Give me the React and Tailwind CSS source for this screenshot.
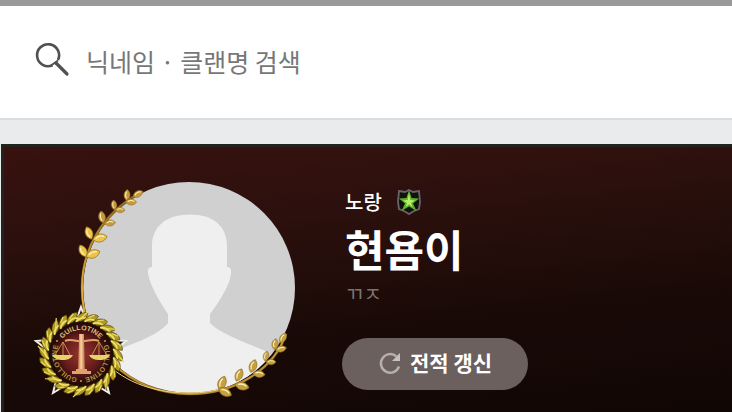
import React, { useState } from "react";

const upperLeaves = [
  { x: 83, y: 251, r: -28, s: 12 },
  { x: 93, y: 254, r: 68, s: 13 },
  { x: 89, y: 233, r: -22, s: 12 },
  { x: 100, y: 238, r: 78, s: 13 },
  { x: 102, y: 217, r: -10, s: 11 },
  { x: 110, y: 223, r: 84, s: 10 },
  { x: 114, y: 205, r: -6, s: 9 },
  { x: 120, y: 210, r: 92, s: 9 },
  { x: 127, y: 195, r: 4, s: 10 },
  { x: 131, y: 202, r: 92, s: 10 },
  { x: 138, y: 194, r: 62, s: 10 },
];

const lowerLeaves = [
  { x: 222, y: 383, r: 22, s: 13 },
  { x: 225, y: 392, r: 118, s: 13 },
  { x: 239, y: 375, r: 24, s: 12 },
  { x: 242, y: 386, r: 104, s: 13 },
  { x: 253, y: 366, r: 20, s: 12 },
  { x: 259, y: 374, r: 98, s: 11 },
  { x: 266, y: 356, r: 14, s: 9 },
  { x: 271, y: 362, r: 90, s: 9 },
  { x: 275, y: 344, r: 10, s: 10 },
  { x: 281, y: 349, r: 78, s: 10 },
  { x: 283, y: 338, r: 32, s: 10 },
];

// leaves of the wreath around the clan badge, thinner and wider in turn
const wreath = Array.from({ length: 24 }, (_, i) => ({ a: i * 15, wide: i % 3 === 0 }));

const Leaf = ({ x, y, r, s, fill }) => (
  <g transform={`translate(${x} ${y}) rotate(${r}) scale(${s / 10})`}>
    <path d="M0 -5.6C4 -2.6 4.2 2.4 0 5.6C-4.2 2.4 -4 -2.6 0 -5.6Z" fill={fill} stroke="#8a6a26" strokeWidth="0.5" />
    <path d="M-0.6 -3.4C-1.8 -1 -1.6 1.4 -0.4 3.2" stroke="#fff3b8" strokeWidth="1" fill="none" />
  </g>
);

const Emblem = () => (
  <svg viewBox="32 178 268 222" className="w-[268px] shrink-0" fill="none" role="img" aria-label="프로필">
    <defs>
      <linearGradient id="gold" x1="0" y1="0" x2="0" y2="1">
        <stop offset="0" stopColor="#8d6422" />
        <stop offset="0.5" stopColor="#e3b041" />
        <stop offset="1" stopColor="#b98b30" />
      </linearGradient>
      <radialGradient id="seal">
        <stop offset="0" stopColor="#96352f" />
        <stop offset="0.55" stopColor="#661d1b" />
        <stop offset="0.8" stopColor="#350f0d" />
        <stop offset="1" stopColor="#1d0907" />
      </radialGradient>
      <linearGradient id="post" x1="0" y1="0" x2="1" y2="0">
        <stop offset="0" stopColor="#b5703f" />
        <stop offset="0.45" stopColor="#ffd3a0" />
        <stop offset="1" stopColor="#b0663a" />
      </linearGradient>
      <clipPath id="face">
        <circle cx="189" cy="288" r="106" />
      </clipPath>
      <path id="seal-text" d="M81 378A24 24 0 1 1 81.1 378" />
    </defs>

    <circle cx="189" cy="288" r="106" fill="#d0d0d0" />
    <path
      clipPath="url(#face)"
      fill="#efefef"
      d="M168 323V314C161 304 153 290 150 281C148 275 147 270 149 268Q150 267 152 267V246C152 226 167 214.500 190 214.500C213 214.500 227 226 227 246V267Q229 267 230 268C232 270 231 276 229 282C226 290 218 304 210 314V323C220 334 247 343 268 352L262 400H110L100 356C128 346 158 336 168 323Z"
    />

    {/* branch */}
    <path d="M138 194C103 214 82 248 82 288C82 349 130 394 189 394C236 394 274 369 286 334" stroke="#6b4c14" strokeWidth="2.600" />
    <path d="M138 194C103 214 82 248 82 288C82 349 130 394 189 394C236 394 274 369 286 334" stroke="url(#gold)" strokeWidth="1.800" />
    <path d="M100 356C119 380 151 393 189 393C204 393 214 391 224 388" stroke="#ecd57c" strokeWidth="1" />
    {upperLeaves.map((l, i) => (
      <Leaf key={i} {...l} fill={i < 4 ? "#ecc548" : "#c69a3c"} />
    ))}
    {lowerLeaves.map((l, i) => (
      <Leaf key={i} {...l} fill="#c4a041" />
    ))}

    {/* clan badge */}
    <path d="M81 307L92 338L126 341L101 361L109 393L81 376L53 393L61 361L36 341L70 338Z" stroke="#f1eee6" strokeWidth="2" fill="#2a1a10" />
    <circle cx="81" cy="354" r="37" fill="#2c2006" />
    {wreath.map(({ a, wide }) => (
      <g key={a} transform={`rotate(${a} 81 354)`}>
        <path d="M75 321C77 315 83 311 88 313C87 319 81 323 75 321Z" fill="#b29a22" stroke="#463806" strokeWidth="0.6" />
        <path d="M76 322C80 317 84 317 88 319" stroke="#efe06a" strokeWidth="1.800" />
        <path d={wide ? "M80 319L89 311" : "M79 317L84 313"} stroke="#e9da5e" strokeWidth="1.200" />
      </g>
    ))}
    <circle cx="81" cy="354" r="32" fill="url(#seal)" />
    <g transform="rotate(120 81 354)" className="font-['Liberation_Sans_Narrow','Liberation_Sans',sans-serif] text-[7px] font-bold">
      <text fill="#e2bf80" textAnchor="middle">
        <textPath href="#seal-text" startOffset="16.700%">GUILLOTINE</textPath>
      </text>
      <text fill="#b5933c" textAnchor="middle">
        <textPath href="#seal-text" startOffset="50%">GUILLOTINE</textPath>
      </text>
      <text fill="#b5933c" textAnchor="middle">
        <textPath href="#seal-text" startOffset="83.300%">GUILLOTINE</textPath>
      </text>
    </g>
    <circle cx="57" cy="341" r="1" fill="#c79a55" />
    <circle cx="105" cy="341" r="1" fill="#c79a55" />
    <circle cx="81" cy="381" r="1" fill="#c79a55" />

    {/* scales */}
    <path d="M65 341C71 338 76 342 81 341C87 342 92 338 99 341" stroke="#e0a26c" strokeWidth="2" />
    <path d="M63 342L55 355M63 342L70 355M63 342V355M99 342L92 355M99 342L107 355M99 342V355" stroke="#d9a95b" strokeWidth="0.8" />
    <path d="M52 355H73C71 359 67 360 63 360C58 360 54 359 52 355Z" fill="#e7d466" />
    <path d="M89 355H110C108 359 104 360 100 360C95 360 91 359 89 355Z" fill="#e7d466" />
    <path d="M79 334H84L84 340L85 369H78L79 340Z" fill="url(#post)" />
    <path d="M76 369H87V371H91V374H72V371H76Z" fill="#e0a070" />
  </svg>
);

const SearchIcon = () => (
  <svg viewBox="0 0 36 36" className="size-9" fill="none" stroke="#505050" aria-hidden="true">
    <path d="M18.500 23.300A11 11 0 1 1 24 18" strokeWidth="2.600" />
    <path d="M17 23.500L24 18.500" strokeWidth="2" />
    <path d="M22 21L33 32" strokeWidth="3.200" strokeLinecap="round" />
  </svg>
);

const RankIcon = () => (
  <svg viewBox="0 0 26 26" className="size-[26px]" fill="none" role="img" aria-label="계급">
    <path d="M3 2L9 3L13 1L17 3L23 2L24 13L23 20L18 22L13 25L8 22L3 20L2 13Z" fill="#10130d" stroke="#69636a" strokeWidth="1.800" />
    <path d="M13 1L15.600 9L23 9.500L17 14.500L20.500 22L13 17.500L5.500 22L9 14.500L3 9.500L10.400 9Z" fill="#5fae2c" />
    <path d="M13 4L14.400 11L19 11.500L15 14L16.500 18L13 15.500L9.500 18L11 14L7 11.500L11.600 11Z" fill="#b5f069" />
  </svg>
);

const RefreshIcon = () => (
  <svg viewBox="0 0 24 24" className="size-6" fill="none" aria-hidden="true">
    <path d="M21 15.500A9.300 9.300 0 1 1 18.500 5.500" stroke="#b5b0af" strokeWidth="2.400" />
    <path d="M22 2V10H14Z" fill="#c5c1c0" />
  </svg>
);

const App = () => {
  const [keyword, setKeyword] = useState("");

  return (
    <div className="flex min-h-screen flex-col bg-[#e9ebed] font-['Noto_Sans_CJK_KR',sans-serif]">
      <div className="h-1.5 bg-[#999999]" />

      <header className="border-b-2 border-[#dcdcdc] bg-white px-[34px] py-8">
        <form className="flex h-12 items-center gap-4" onSubmit={(e) => e.preventDefault()}>
          <button type="submit" aria-label="검색" className="shrink-0 pb-1">
            <SearchIcon />
          </button>
          <input
            type="text"
            aria-label="닉네임 · 클랜명 검색"
            placeholder="닉네임 · 클랜명 검색"
            value={keyword}
            onChange={(e) => setKeyword(e.target.value)}
            className="h-12 min-w-0 flex-1 pb-0.5 text-[25px] text-[#333333] outline-none placeholder:text-[#777777]"
          />
        </form>
      </header>

      <main className="flex flex-1 flex-col pt-6 pl-px">
        <section className="flex flex-1 items-start gap-[42px] border-t-3 border-l-3 border-[#22231e] bg-linear-[174deg,#38120f_0%,#2b100d_30%,#1a0a07_62%,#100604_100%] pt-[31px] pl-7 text-white">
          <Emblem />
          <div className="flex flex-col items-start">
            <div className="flex flex-col pt-2 pl-[3px]">
              <div className="flex h-8 items-center gap-3.5">
                <span className="text-xl leading-8 font-medium">노랑</span>
                <RankIcon />
              </div>
              <h1 className="text-[43px] leading-[60px] font-bold">현욤이</h1>
              <p className="text-xl leading-8 text-[#7d7472]">ㄲㅈ</p>
            </div>
            <button
              type="button"
              className="mt-7 flex h-[52px] items-center gap-2 rounded-full bg-[#6b605e] px-9 pb-0.5 text-[21px] font-bold whitespace-nowrap"
            >
              <RefreshIcon />
              전적 갱신
            </button>
          </div>
        </section>
      </main>
    </div>
  );
};

export default App;
